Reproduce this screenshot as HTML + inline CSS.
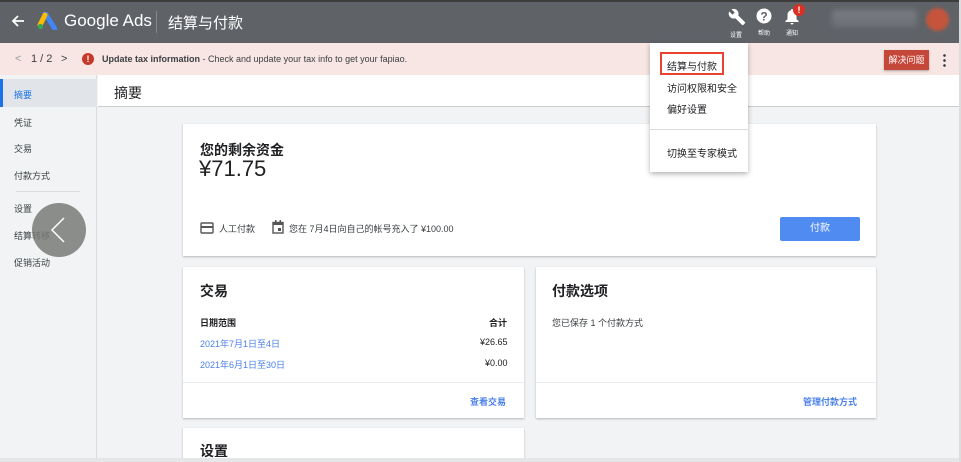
<!DOCTYPE html>
<html><head><meta charset="utf-8"><style>
*{box-sizing:border-box;margin:0;padding:0}
html,body{width:961px;height:462px;overflow:hidden}
body{background:#f1f3f4;font-family:"Liberation Sans","Noto Sans CJK SC",sans-serif;color:#202124;position:relative}
.a{position:absolute}
.card{position:absolute;background:#fff;box-shadow:0 1px 2px rgba(0,0,0,.25)}
.t{font-size:11px;white-space:nowrap}
</style></head><body>
<div class="a" style="left:0;top:0;width:961px;height:2px;background:#3c3c3c"></div>
<div class="a" style="left:0;top:2px;width:961px;height:41px;background:#5f6368"></div>
<svg class="a" style="left:11px;top:14px" width="14" height="14" viewBox="0 0 14 14"><path d="M13 7H2M7 2L2 7l5 5" stroke="#fff" stroke-width="1.8" fill="none"/></svg>
<svg class="a" style="left:37px;top:12px" width="20" height="18" viewBox="0 0 20 18"><path d="M8 1l10 16" stroke="#4285f4" stroke-width="5" stroke-linecap="round"/><path d="M8 3L3 13" stroke="#fbbc04" stroke-width="5" stroke-linecap="round"/><circle cx="3.5" cy="14.5" r="2.6" fill="#34a853"/></svg>
<div class="a" style="left:64px;top:11px;font-size:17px;color:#fff">Google Ads</div>
<div class="a" style="left:156px;top:11px;width:1px;height:22px;background:#888"></div>
<div class="a" style="left:168px;top:12px;font-size:15px;color:#fff">结算与付款</div>
<svg class="a" style="left:728px;top:8px" width="18" height="18" viewBox="0 0 24 24"><path d="M22.7 19l-9.1-9.1c.9-2.3.4-5-1.5-6.9-2-2-5-2.4-7.4-1.3L9 6 6 9 1.6 4.7C.4 7.1.9 10.1 2.9 12.1c1.9 1.9 4.6 2.4 6.9 1.5l9.1 9.1c.4.4 1 .4 1.4 0l2.3-2.3c.5-.4.5-1.1.1-1.4z" fill="#fff"/></svg>
<svg class="a" style="left:756px;top:8px" width="16" height="16"><circle cx="8" cy="8" r="7.5" fill="#fff"/><text x="8" y="12.5" text-anchor="middle" font-size="12" font-weight="bold" fill="#5f6368" font-family="Liberation Sans">?</text></svg>
<svg class="a" style="left:784px;top:8px" width="16" height="17"><path d="M8 1a1 1 0 0 1 1 1.3C11.5 3 12.5 5 12.5 7.5V11l2 2v1h-13v-1l2-2V7.5C3.5 5 4.5 3 7 2.3A1 1 0 0 1 8 1zM6.5 15h3a1.5 1.5 0 0 1-3 0z" fill="#fff"/></svg>
<div class="a" style="left:793px;top:4px;width:12px;height:12px;border-radius:50%;background:#d93025;color:#fff;font-size:9px;font-weight:bold;text-align:center;line-height:12px">!</div>
<div class="a" style="left:730px;top:30px;font-size:6px;color:#fff">设置</div>
<div class="a" style="left:758px;top:28px;font-size:6px;color:#fff">帮助</div>
<div class="a" style="left:786px;top:28px;font-size:6px;color:#fff">通知</div>
<div class="a" style="left:832px;top:10px;width:85px;height:18px;background:linear-gradient(#7a7e83,#6a6e73);filter:blur(3px);border-radius:4px"></div>
<div class="a" style="left:926px;top:8px;width:23px;height:23px;border-radius:50%;background:#c4553c;filter:blur(1.5px)"></div>
<div class="a" style="left:0;top:43px;width:961px;height:32px;background:#f7e6e4"></div>
<div class="a t" style="left:15px;top:53px;color:#999">&lt;</div>
<div class="a t" style="left:31px;top:53px;color:#3c4043">1 / 2</div>
<div class="a t" style="left:61px;top:53px;color:#3c4043">&gt;</div>
<div class="a" style="left:82px;top:53px;width:12px;height:12px;border-radius:50%;background:#c5392b;color:#fff;font-size:9px;font-weight:bold;text-align:center;line-height:12px">!</div>
<div class="a" style="left:102px;top:54px;font-size:9px;color:#3c4043;white-space:nowrap"><b>Update tax information</b> - Check and update your tax info to get your fapiao.</div>
<div class="a" style="left:884px;top:50px;width:45px;height:20px;background:#c5473a;color:#fff;font-size:9px;text-align:center;line-height:20px;box-shadow:0 1px 2px rgba(0,0,0,.3);white-space:nowrap">解决问题</div>
<div class="a" style="left:943px;top:53px;width:3px;height:14px;background:radial-gradient(circle,#444 1.2px,transparent 1.5px) 0 0/3px 5px"></div>
<div class="a" style="left:0;top:75px;width:97px;height:387px;background:#f1f3f4;border-right:1px solid #dadce0"></div>
<div class="a" style="left:0;top:79px;width:97px;height:28px;background:#e1e4e8;border-left:3px solid #1a73e8"></div>
<div class="a t" style="left:14px;top:88px;color:#1a73e8;font-size:9px">摘要</div>
<div class="a t" style="left:14px;top:116px;color:#3c4043;font-size:9px">凭证</div>
<div class="a t" style="left:14px;top:142px;color:#3c4043;font-size:9px">交易</div>
<div class="a t" style="left:14px;top:169px;color:#3c4043;font-size:9px">付款方式</div>
<div class="a" style="left:16px;top:191px;width:64px;height:1px;background:#dadce0"></div>
<div class="a t" style="left:14px;top:202px;color:#3c4043;font-size:9px">设置</div>
<div class="a t" style="left:14px;top:229px;color:#3c4043;font-size:9px">结算转移</div>
<div class="a t" style="left:14px;top:256px;color:#3c4043;font-size:9px">促销活动</div>
<div class="a" style="left:32px;top:203px;width:54px;height:54px;border-radius:50%;background:rgba(120,122,118,.85)"></div>
<svg class="a" style="left:50px;top:217px" width="16" height="26"><path d="M14 1L2 13l12 12" stroke="#fff" stroke-width="1.5" fill="none"/></svg>
<div class="a" style="left:98px;top:75px;width:863px;height:32px;background:#fff;border-bottom:1px solid #ccc"></div>
<div class="a" style="left:114px;top:83px;font-size:14px;color:#202124">摘要</div>
<div class="card" style="left:183px;top:124px;width:693px;height:132px"></div>
<div class="a" style="left:200px;top:140px;font-size:14px;font-weight:bold">您的剩余资金</div>
<div class="a" style="left:199px;top:156px;font-size:22px">¥71.75</div>
<svg class="a" style="left:200px;top:222px" width="14" height="12"><rect x="1" y="1" width="12" height="10" rx="1" fill="none" stroke="#555" stroke-width="1.4"/><rect x="1" y="4" width="12" height="2" fill="#555"/></svg>
<div class="a" style="left:219px;top:222px;font-size:9px;color:#3c4043">人工付款</div>
<svg class="a" style="left:272px;top:220px" width="12" height="14"><rect x="1" y="2.5" width="10" height="10.5" fill="none" stroke="#555" stroke-width="1.4"/><rect x="1" y="2.5" width="10" height="2.5" fill="#555"/><rect x="3" y="0" width="1.5" height="3" fill="#555"/><rect x="7.5" y="0" width="1.5" height="3" fill="#555"/><rect x="6" y="8" width="3" height="3" fill="#555"/></svg>
<div class="a" style="left:289px;top:222px;font-size:9px;color:#3c4043;white-space:nowrap">您在 7月4日向自己的帐号充入了 ¥100.00</div>
<div class="a" style="left:780px;top:217px;width:80px;height:24px;background:#4f8bf0;color:#fff;font-size:10px;text-align:center;line-height:24px;border-radius:2px">付款</div>
<div class="card" style="left:183px;top:267px;width:341px;height:151px"></div>
<div class="a" style="left:200px;top:281px;font-size:14px;font-weight:bold">交易</div>
<div class="a" style="left:200px;top:316px;font-size:9px;font-weight:bold">日期范围</div>
<div class="a" style="left:489px;top:316px;font-size:9px;font-weight:bold">合计</div>
<div class="a" style="left:200px;top:337px;font-size:9px;color:#4a80e8">2021年7月1日至4日</div>
<div class="a" style="left:480px;top:337px;font-size:9px">¥26.65</div>
<div class="a" style="left:200px;top:358px;font-size:9px;color:#4a80e8">2021年6月1日至30日</div>
<div class="a" style="left:485px;top:358px;font-size:9px">¥0.00</div>
<div class="a" style="left:183px;top:382px;width:341px;height:1px;background:#e8eaed"></div>
<div class="a" style="left:470px;top:395px;font-size:9px;font-weight:bold;color:#4a80e8">查看交易</div>
<div class="card" style="left:536px;top:267px;width:340px;height:151px"></div>
<div class="a" style="left:552px;top:281px;font-size:14px;font-weight:bold">付款选项</div>
<div class="a" style="left:552px;top:316px;font-size:9px;color:#3c4043">您已保存 1 个付款方式</div>
<div class="a" style="left:536px;top:382px;width:340px;height:1px;background:#e8eaed"></div>
<div class="a" style="left:803px;top:395px;font-size:9px;font-weight:bold;color:#4a80e8">管理付款方式</div>
<div class="card" style="left:183px;top:428px;width:341px;height:40px"></div>
<div class="a" style="left:200px;top:441px;font-size:14px;font-weight:bold">设置</div>
<div class="a" style="left:0;top:458px;width:961px;height:4px;background:#e4e6e8"></div>
<div class="a" style="left:959px;top:0;width:2px;height:462px;background:#ddd"></div>
<div class="card" style="left:650px;top:43px;width:98px;height:129px;box-shadow:0 2px 5px rgba(0,0,0,.3)"></div>
<div class="a" style="left:660px;top:52px;width:64px;height:23px;border:2px solid #e8432f"></div>
<div class="a" style="left:667px;top:58px;font-size:10px;color:#202124">结算与付款</div>
<div class="a" style="left:667px;top:80px;font-size:10px;color:#202124">访问权限和安全</div>
<div class="a" style="left:667px;top:101px;font-size:10px;color:#202124">偏好设置</div>
<div class="a" style="left:650px;top:129px;width:98px;height:1px;background:#dadce0"></div>
<div class="a" style="left:667px;top:145px;font-size:10px;color:#202124">切换至专家模式</div>
</body></html>
